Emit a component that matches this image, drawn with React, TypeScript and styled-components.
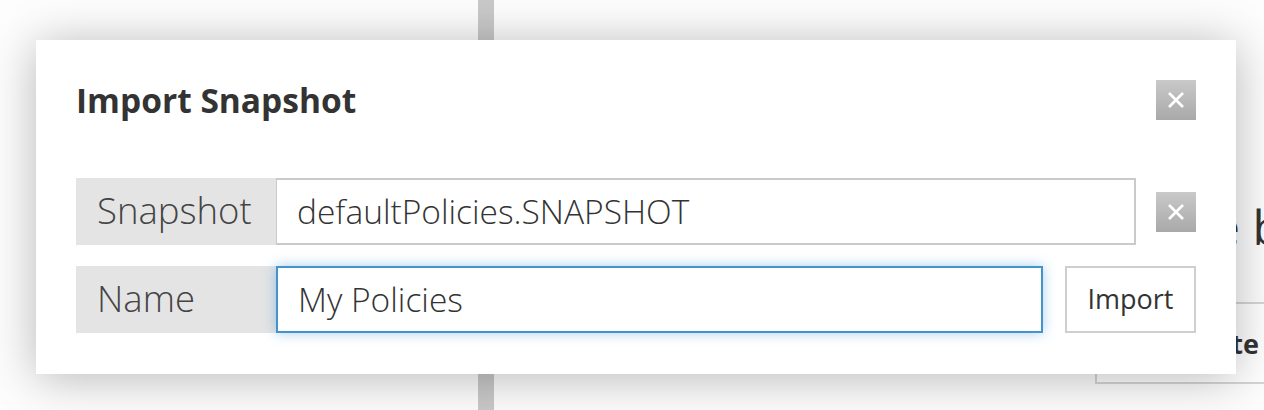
import React from 'react'
import styled, { createGlobalStyle } from 'styled-components'

const GlobalStyle = createGlobalStyle`
  html, body {
    margin: 0;
    padding: 0;
    background: #fdfdfd;
    font-family: "Open Sans", Lato, sans-serif;
  }
`

const Page = styled.div`
  position: relative;
  display: flex;
  width: 1264px;
  height: 410px;
  overflow: hidden;
`

const Sidebar = styled.div`
  width: 478px;
  flex-shrink: 0;
`

const Divider = styled.div`
  width: 16px;
  flex-shrink: 0;
  background: #c9c9c9;
`

const Content = styled.div`
  flex: 1;
  display: flex;
  flex-direction: column;
  padding-top: 196px;
`

const PageTitle = styled.h1`
  margin: 0;
  padding-left: 719px;
  font-size: 48px;
  line-height: 62px;
  font-weight: 400;
  color: #333;
  white-space: nowrap;
`

const Table = styled.div`
  margin: 44px 0 0 601px;
  height: 78px;
  border: 2px solid #d6d6d6;
  border-right: none;
  background: #fff;
  display: flex;
  align-items: center;
`

const HeaderCell = styled.div`
  padding-left: 98px;
  font-size: 27px;
  font-weight: 700;
  color: #333;
  white-space: nowrap;
`

const Modal = styled.div`
  position: absolute;
  left: 36px;
  top: 40px;
  width: 1200px;
  box-sizing: border-box;
  padding: 40px 40px 41px;
  background: #fff;
  box-shadow: 0 4px 45px rgba(0, 0, 0, 0.28);
`

const ModalHeader = styled.div`
  display: flex;
  align-items: center;
  justify-content: space-between;
  height: 40px;
  margin-bottom: 58px;
`

const ModalTitle = styled.h2`
  margin: 0;
  font-size: 33.5px;
  font-weight: 700;
  color: #333;
`

const CloseButton = styled.button`
  width: 40px;
  height: 40px;
  flex-shrink: 0;
  padding: 0;
  border: none;
  background: linear-gradient(#c9c9c9, #a9a9a9);
  display: flex;
  align-items: center;
  justify-content: center;
  cursor: pointer;
`

const Form = styled.div`
  display: flex;
  flex-direction: column;
  gap: 21px;
`

const Row = styled.div<{ $gap: number }>`
  display: flex;
  align-items: center;
  gap: ${p => p.$gap}px;
`

const InputGroup = styled.div`
  flex: 1;
  display: flex;
  height: 67px;
`

const Label = styled.div`
  width: 200px;
  flex-shrink: 0;
  box-sizing: border-box;
  padding: 0 0 3px 21px;
  display: flex;
  align-items: center;
  background: #e4e4e4;
  font-size: 36.5px;
  font-weight: 300;
  color: #444;
`

const Field = styled.input<{ $focused?: boolean }>`
  flex: 1;
  min-width: 0;
  box-sizing: border-box;
  height: 67px;
  margin: 0;
  padding: 0 0 2px 20px;
  border: 2px solid ${p => (p.$focused ? '#4393cf' : '#cacaca')};
  border-left-width: ${p => (p.$focused ? 2 : 1)}px;
  outline: none;
  background: #fff;
  font-family: "Open Sans", Lato, sans-serif;
  font-size: 33.5px;
  font-weight: 300;
  color: #333;
  box-shadow: ${p => (p.$focused ? '0 0 12px rgba(67, 147, 207, 0.45)' : 'none')};
`

const ImportButton = styled.button`
  width: 131px;
  height: 67px;
  flex-shrink: 0;
  box-sizing: border-box;
  padding: 0 0 2px;
  border: 2px solid #cfcfcf;
  background: #fff;
  font-family: "Open Sans", Lato, sans-serif;
  font-size: 27px;
  font-weight: 400;
  color: #333;
  cursor: pointer;
`

const Cross = () => (
  <svg width="18" height="18" viewBox="0 0 18 18">
    <path d="M2 2L16 16M16 2L2 16" stroke="#fff" strokeWidth="2.6" strokeLinecap="butt" />
  </svg>
)

const App = () => {
  return (
    <>
      <GlobalStyle />
      <Page>
        <Sidebar />
        <Divider />
        <Content>
          <PageTitle>e bundles</PageTitle>
          <Table>
            <HeaderCell>Date</HeaderCell>
          </Table>
        </Content>

        <Modal>
          <ModalHeader>
            <ModalTitle>Import Snapshot</ModalTitle>
            <CloseButton aria-label="Close">
              <Cross />
            </CloseButton>
          </ModalHeader>
          <Form>
            <Row $gap={20}>
              <InputGroup>
                <Label>Snapshot</Label>
                <Field readOnly value="defaultPolicies.SNAPSHOT" />
              </InputGroup>
              <CloseButton aria-label="Clear">
                <Cross />
              </CloseButton>
            </Row>
            <Row $gap={22}>
              <InputGroup>
                <Label>Name</Label>
                <Field $focused defaultValue="My Policies" />
              </InputGroup>
              <ImportButton>Import</ImportButton>
            </Row>
          </Form>
        </Modal>
      </Page>
    </>
  )
}

export default App
